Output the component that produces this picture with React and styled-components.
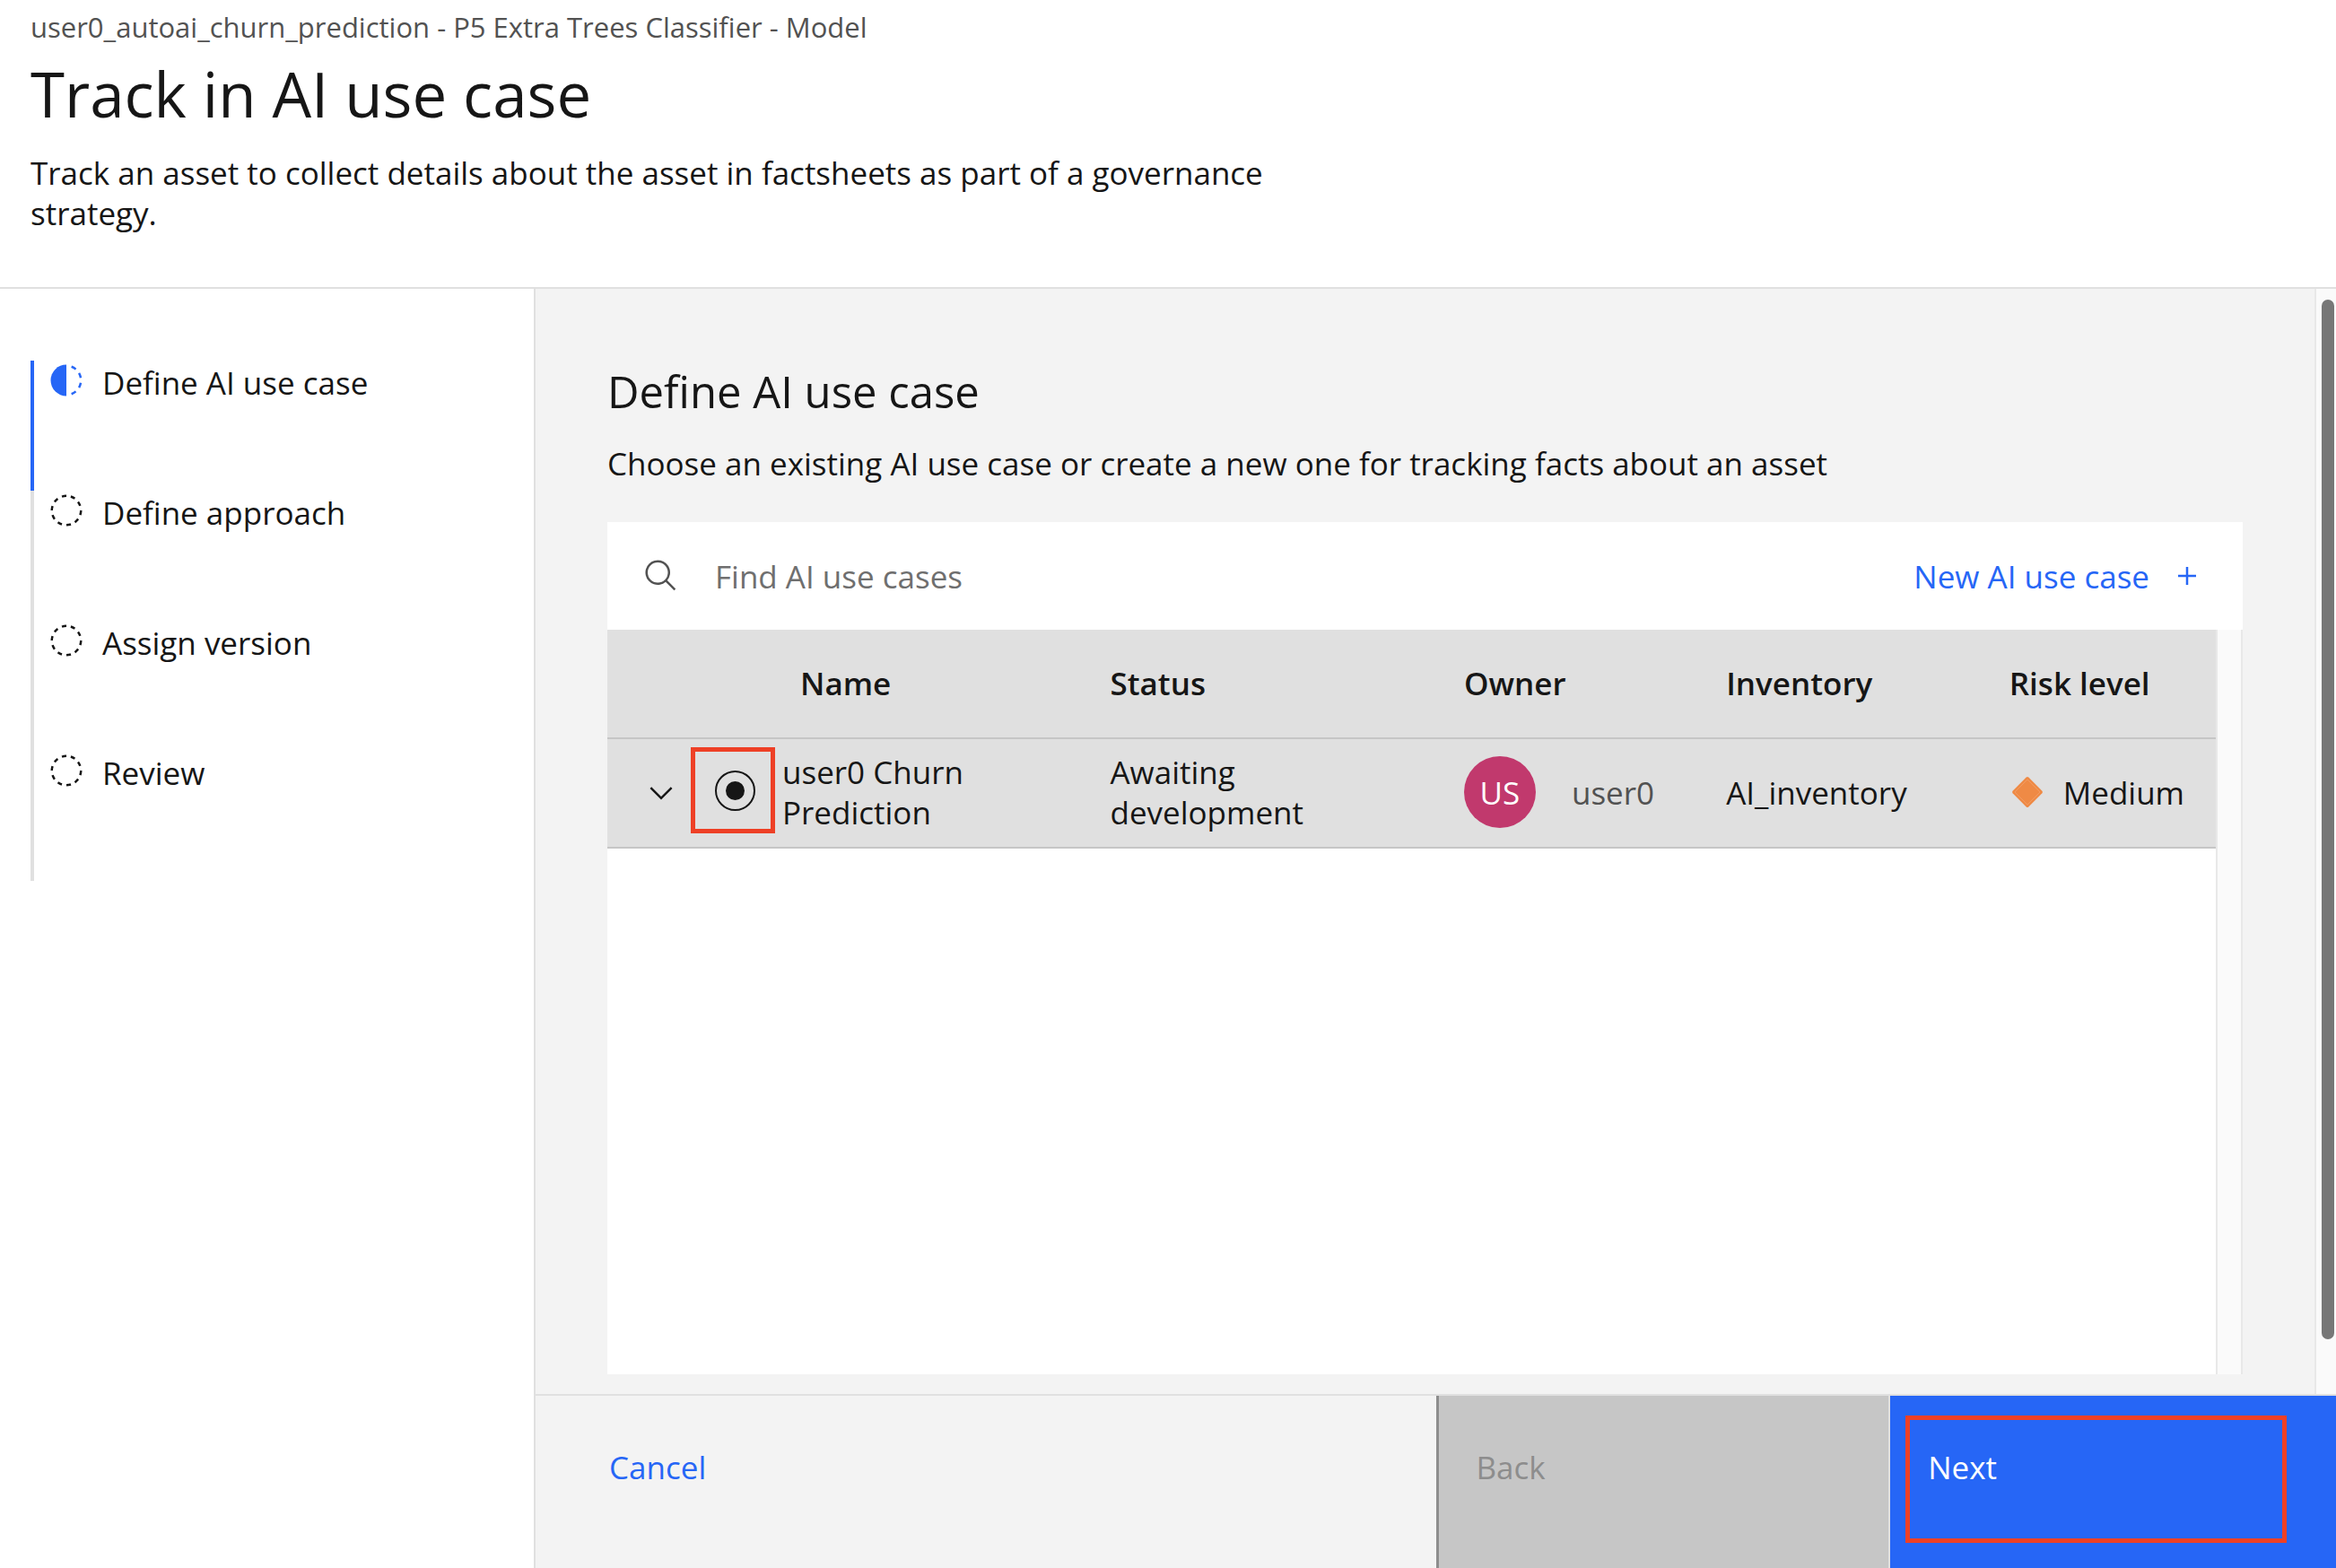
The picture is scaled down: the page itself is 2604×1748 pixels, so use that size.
import React, { useState } from "react";
import styled, { createGlobalStyle } from "styled-components";

const color = {
  text: "#161616",
  muted: "#525252",
  placeholder: "#6f6f6f",
  blue: "#2666f6",
  surface: "#f3f3f3",
  line: "#e0e0e0",
  lineStrong: "#c6c6c6",
  mark: "#ee4026",
};

const GlobalStyle = createGlobalStyle`
  *, *::before, *::after { box-sizing: border-box; }
  body {
    margin: 0;
    background: #fff;
    color: ${color.text};
    font-family: "Open Sans", "Noto Sans", sans-serif;
    font-size: 35px;
    line-height: 45px;
  }
  button, input { font: inherit; color: inherit; }
`;

const Page = styled.div`
  display: grid;
  grid-template-rows: auto 1fr;
  min-height: 100vh;
`;

const Header = styled.header`
  padding: 10px 34px 60px;
  border-bottom: 2px solid ${color.line};
`;

const Crumb = styled.p`
  margin: 0 0 10px;
  font-size: 31px;
  line-height: 40px;
  color: ${color.muted};
`;

const Title = styled.h1`
  margin: 0 0 22px;
  font-size: 69px;
  line-height: 88px;
  font-weight: 400;
`;

const Lead = styled.p`
  margin: 0;
  max-width: 1440px;
`;

const Body = styled.div`
  display: grid;
  grid-template-columns: 597px 1fr;
`;

const Side = styled.nav`
  padding: 80px 34px 0;
  border-right: 2px solid ${color.line};
`;

const Steps = styled.ol`
  margin: 0;
  padding: 0;
  list-style: none;
`;

const Step = styled.li`
  display: flex;
  align-items: flex-start;
  gap: 20px;
  height: 145px;
  padding: 2px 0 0 16px;
  border-left: 4px solid ${(p) => (p.$current ? color.blue : color.line)};
`;

const Icon = styled.svg`
  display: block;
  flex: none;
  width: 40px;
  height: 40px;
  fill: ${(p) => p.$fill || "currentColor"};
`;

const Work = styled.div`
  display: grid;
  grid-template-rows: 1fr auto;
  min-width: 0;
  background: ${color.surface};
`;

const Scroller = styled.div`
  display: grid;
  grid-template-columns: 1fr 24px;
`;

const Main = styled.main`
  display: flex;
  flex-direction: column;
  min-width: 0;
  padding: 84px 80px 22px;
`;

const Heading = styled.h2`
  margin: 0 0 28px;
  font-size: 49px;
  line-height: 60px;
  font-weight: 400;
`;

const Hint = styled.p`
  margin: 0 0 43px;
`;

const Toolbar = styled.div`
  display: flex;
  align-items: center;
  height: 120px;
  padding: 0 42px 0 40px;
  background: #fff;
`;

const SearchLabel = styled.label`
  display: flex;
  flex: 1;
  align-items: center;
  gap: 40px;
  color: ${color.muted};
`;

const SearchInput = styled.input`
  flex: 1;
  min-width: 0;
  padding: 0;
  border: 0;
  outline: 0;
  background: transparent;
  color: ${color.text};
  &::placeholder { color: ${color.placeholder}; opacity: 1; }
`;

const LinkButton = styled.button`
  display: flex;
  align-items: center;
  gap: 22px;
  padding: 0;
  border: 0;
  background: transparent;
  color: ${color.blue};
  cursor: pointer;
`;

const TableFrame = styled.div`
  display: grid;
  grid-template-columns: 1fr 30px;
  flex: 1;
  background: #fff;
`;

const Gutter = styled.div`
  border: solid #e8e8e8;
  border-width: 0 2px;
  background: #fafafa;
`;

const Table = styled.table`
  width: 100%;
  align-self: start;
  table-layout: fixed;
  border-collapse: separate;
  border-spacing: 0;
  background: ${color.line};
`;

const Col = styled.col`
  width: ${(p) => p.$width};
`;

const HeadCell = styled.th`
  height: 122px;
  padding: 0 0 2px ${(p) => (p.$near ? "28px" : "40px")};
  border-bottom: 2px solid ${color.lineStrong};
  font-weight: 600;
  text-align: left;
  white-space: nowrap;
`;

const Cell = styled.td`
  height: 122px;
  padding: 0 40px 2px ${(p) => (p.$near ? "8px" : "40px")};
  border-bottom: 2px solid ${color.lineStrong};
`;

const ControlCell = styled(Cell)`
  padding: 0;
`;

const ExpandButton = styled.button`
  display: block;
  margin-left: 40px;
  padding: 0;
  border: 0;
  background: transparent;
  cursor: pointer;
`;

const RadioMark = styled.span`
  display: flex;
  align-items: center;
  justify-content: center;
  height: 96px;
  margin-bottom: 6px;
  padding-left: 5px;
  border: 5px solid ${color.mark};
`;

const Radio = styled.input`
  display: grid;
  place-items: center;
  width: 45px;
  height: 45px;
  margin: 0;
  appearance: none;
  border: 2px solid ${color.text};
  border-radius: 50%;
  &:checked::before {
    content: "";
    width: 21px;
    height: 21px;
    border-radius: 50%;
    background: ${color.text};
  }
`;

const Inline = styled.div`
  display: flex;
  align-items: center;
  gap: ${(p) => p.$gap};
  color: ${(p) => p.$color || "inherit"};
`;

const Avatar = styled.span`
  display: flex;
  align-items: center;
  justify-content: center;
  flex: none;
  width: 80px;
  height: 80px;
  border-radius: 50%;
  background: #c1396d;
  color: #fff;
`;

const Track = styled.div`
  padding: 12px 2px 61px 6px;
  border-left: 2px solid #e8e8e8;
  background: #fafafa;
`;

const Thumb = styled.div`
  height: 100%;
  border-radius: 7px;
  background: #777;
`;

const Footer = styled.footer`
  display: grid;
  grid-template-columns: 200fr 101fr 99fr;
  height: 194px;
  border-top: 2px solid ${color.line};
`;

const FooterButton = styled.button`
  display: flex;
  align-items: flex-start;
  padding: 57px 42px 0;
  border: 0;
  text-align: left;
  cursor: pointer;
`;

const CancelButton = styled(FooterButton)`
  padding-left: 82px;
  background: transparent;
  color: ${color.blue};
`;

const BackButton = styled(FooterButton)`
  border-left: 3px solid #8d8d8d;
  border-right: 2px solid ${color.line};
  background: ${color.lineStrong};
  color: #8d8d8d;
  cursor: not-allowed;
`;

const NextButton = styled(FooterButton)`
  position: relative;
  background: ${color.blue};
  color: #fff;
  &::after {
    content: "";
    position: absolute;
    inset: 22px 55px 28px 17px;
    border: 5px solid ${color.mark};
  }
`;

const HalfCircle = () => (
  <Icon viewBox="0 0 32 32" $fill={color.blue} aria-hidden="true">
    <path d="M23.7642 6.8593l1.2851-1.5315A13.976 13.976 0 0020.8672 2.887l-.6836 1.8776A11.9729 11.9729 0 0123.7642 6.8593z" />
    <path d="M27.81 14l1.9677-.4128A13.8888 13.8888 0 0028.14 9.0457L26.4087 10A12.52 12.52 0 0127.81 14z" />
    <path d="M20.1836 27.2354l.6836 1.8776a13.976 13.976 0 004.1821-2.4408l-1.2851-1.5315A11.9729 11.9729 0 0120.1836 27.2354z" />
    <path d="M26.4087 22L28.14 23a14.14 14.14 0 001.6382-4.5872L27.81 18.0659A12.1519 12.1519 0 0126.4087 22z" />
    <path d="M16 30V2a14 14 0 000 28z" />
  </Icon>
);

const DashedCircle = () => (
  <Icon viewBox="0 0 32 32" aria-hidden="true">
    <path d="M7.7 4.7a14.7 14.7 0 00-3 3.1L6.3 9A13.26 13.26 0 018.9 6.3z" />
    <path d="M4.6 12.3l-1.9-.6A12.51 12.51 0 002 16H4A11.48 11.48 0 014.6 12.3z" />
    <path d="M2.7 20.4a14.4 14.4 0 002 3.9l1.6-1.2a12.89 12.89 0 01-1.7-3.3z" />
    <path d="M7.8 27.3a14.4 14.4 0 003.9 2l.6-1.9A12.89 12.89 0 019 25.7z" />
    <path d="M11.7 2.7l.6 1.9A11.48 11.48 0 0116 4V2A12.51 12.51 0 0011.7 2.7z" />
    <path d="M24.2 27.3a15.18 15.18 0 003.1-3.1L25.7 23A11.53 11.53 0 0123 25.7z" />
    <path d="M27.4 19.7l1.9.6A15.47 15.47 0 0030 16H28A11.48 11.48 0 0127.4 19.7z" />
    <path d="M29.2 11.6a14.4 14.4 0 00-2-3.9L25.6 8.9a12.89 12.89 0 011.7 3.3z" />
    <path d="M24.1 4.6a14.4 14.4 0 00-3.9-2l-.6 1.9a12.89 12.89 0 013.3 1.7z" />
    <path d="M20.3 29.3l-.6-1.9A11.48 11.48 0 0116 28v2A21.42 21.42 0 0020.3 29.3z" />
  </Icon>
);

const SearchIcon = () => (
  <Icon viewBox="0 0 32 32" aria-hidden="true">
    <path d="M29 27.5859l-7.5521-7.5521a11.0177 11.0177 0 10-1.4141 1.4141L27.5859 29ZM4 13a9 9 0 119 9A9.01 9.01 0 014 13Z" />
  </Icon>
);

const PlusIcon = () => (
  <Icon viewBox="0 0 32 32" aria-hidden="true">
    <path d="M17 15V8h-2v7H8v2h7v7h2v-7h7v-2z" />
  </Icon>
);

const ChevronIcon = () => (
  <Icon viewBox="0 0 16 16" aria-hidden="true">
    <path d="M8 11L3 6l.7-.7L8 9.6l4.3-4.3.7.7z" />
  </Icon>
);

const DiamondIcon = () => (
  <Icon viewBox="0 0 40 40" $fill="#ef8a45" aria-hidden="true">
    <path d="M18.7 3.6Q20 2.4 21.3 3.6L36.4 18.7Q37.6 20 36.4 21.3L21.3 36.4Q20 37.6 18.7 36.4L3.6 21.3Q2.4 20 3.6 18.7Z" />
    <path d="M20 6L34 20L20 34L6 20Z" fill="none" stroke="#f2a674" strokeWidth="0.6" />
  </Icon>
);

const steps = ["Define AI use case", "Define approach", "Assign version", "Review"];

export default function App() {
  const [query, setQuery] = useState("");
  const [selected, setSelected] = useState("user0-churn");

  return (
    <>
      <GlobalStyle />
      <Page>
        <Header>
          <Crumb>user0_autoai_churn_prediction - P5 Extra Trees Classifier - Model</Crumb>
          <Title>Track in AI use case</Title>
          <Lead>
            Track an asset to collect details about the asset in factsheets as part of a
            governance strategy.
          </Lead>
        </Header>
        <Body>
          <Side aria-label="Progress">
            <Steps>
              {steps.map((name, i) => (
                <Step key={name} $current={i === 0} aria-current={i === 0 ? "step" : undefined}>
                  {i === 0 ? <HalfCircle /> : <DashedCircle />}
                  <span>{name}</span>
                </Step>
              ))}
            </Steps>
          </Side>
          <Work>
            <Scroller>
              <Main>
                <Heading>Define AI use case</Heading>
                <Hint>
                  Choose an existing AI use case or create a new one for tracking facts about an
                  asset
                </Hint>
                <Toolbar>
                  <SearchLabel>
                    <SearchIcon />
                    <SearchInput
                      type="text"
                      aria-label="Find AI use cases"
                      placeholder="Find AI use cases"
                      value={query}
                      onChange={(e) => setQuery(e.target.value)}
                    />
                  </SearchLabel>
                  <LinkButton type="button">
                    New AI use case
                    <PlusIcon />
                  </LinkButton>
                </Toolbar>
                <TableFrame>
                  <Table>
                    <colgroup>
                      <Col $width="93px" />
                      <Col $width="94px" />
                      <Col $width="18.6%" />
                      <Col $width="22%" />
                      <Col $width="16.3%" />
                      <Col $width="17.6%" />
                      <Col $width="auto" />
                    </colgroup>
                    <thead>
                      <tr>
                        <HeadCell as="td" />
                        <HeadCell as="td" />
                        <HeadCell scope="col" $near>Name</HeadCell>
                        <HeadCell scope="col">Status</HeadCell>
                        <HeadCell scope="col">Owner</HeadCell>
                        <HeadCell scope="col">Inventory</HeadCell>
                        <HeadCell scope="col">Risk level</HeadCell>
                      </tr>
                    </thead>
                    <tbody>
                      <tr>
                        <ControlCell>
                          <ExpandButton type="button" aria-label="Expand row">
                            <ChevronIcon />
                          </ExpandButton>
                        </ControlCell>
                        <ControlCell>
                          <RadioMark>
                            <Radio
                              type="radio"
                              name="use-case"
                              aria-label="user0 Churn Prediction"
                              checked={selected === "user0-churn"}
                              onChange={() => setSelected("user0-churn")}
                            />
                          </RadioMark>
                        </ControlCell>
                        <Cell $near>user0 Churn Prediction</Cell>
                        <Cell>Awaiting development</Cell>
                        <Cell>
                          <Inline $gap="40px" $color={color.muted}>
                            <Avatar>US</Avatar>
                            user0
                          </Inline>
                        </Cell>
                        <Cell>AI_inventory</Cell>
                        <Cell>
                          <Inline $gap="20px">
                            <DiamondIcon />
                            Medium
                          </Inline>
                        </Cell>
                      </tr>
                    </tbody>
                  </Table>
                  <Gutter />
                </TableFrame>
              </Main>
              <Track>
                <Thumb />
              </Track>
            </Scroller>
            <Footer>
              <CancelButton type="button">Cancel</CancelButton>
              <BackButton type="button" disabled>Back</BackButton>
              <NextButton type="button">Next</NextButton>
            </Footer>
          </Work>
        </Body>
      </Page>
    </>
  );
}
